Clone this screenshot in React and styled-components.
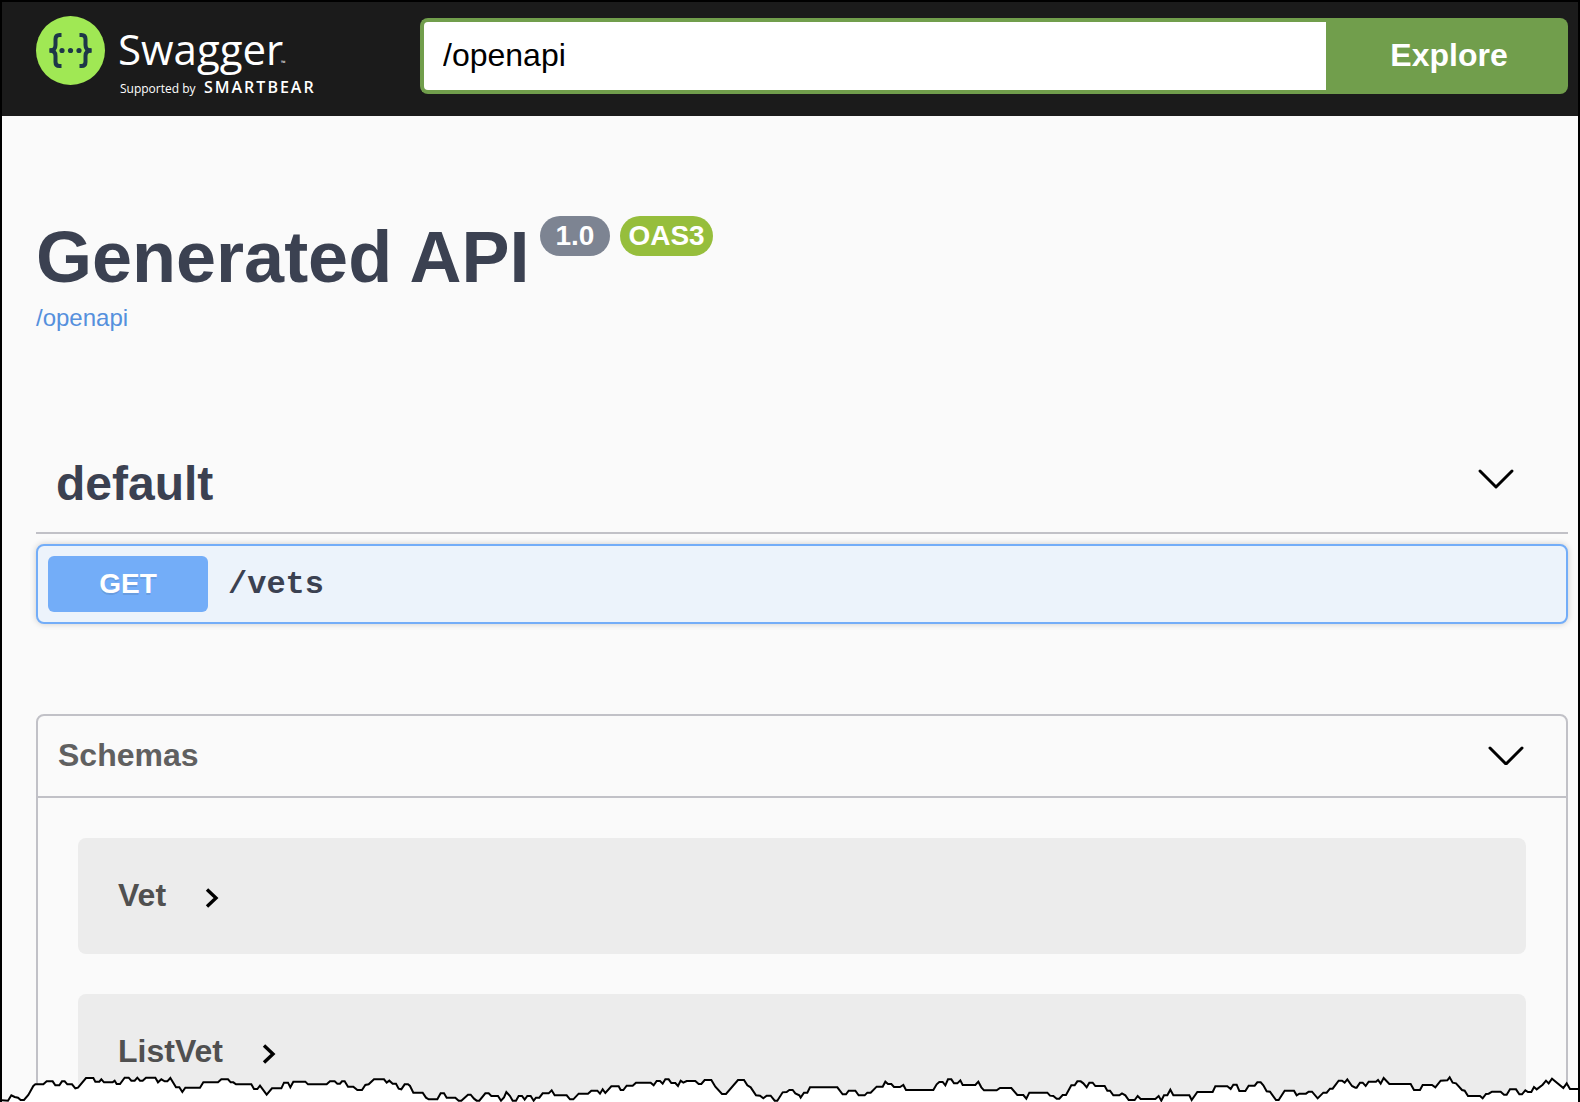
import React, { useState } from "react";
import styled, { createGlobalStyle } from "styled-components";

const GlobalStyle = createGlobalStyle`
  *, *::before, *::after { box-sizing: border-box; }
  body {
    margin: 0;
    background: #fff;
    color: #3b4151;
    font-family: "Liberation Sans", Arial, sans-serif;
  }
  button, input { font: inherit; }
`;

const Page = styled.div`
  position: relative;
  height: 100vh;
  overflow: hidden;
  border: 2px solid #000;
  border-bottom: 0;
  background: #fafafa;
`;

const Topbar = styled.header`
  display: flex;
  align-items: flex-start;
  padding: 16px 10px 22px 34px;
  background: #1b1b1b;
`;

const LogoLink = styled.a`
  flex: 0 0 384px;
  height: 76px;
  color: #fff;
  text-decoration: none;
`;

const LogoDrawing = styled.svg`
  display: block;
  overflow: visible;
  fill: #fff;
  font-family: "Open Sans", "Noto Sans", sans-serif;
`;

const SpecForm = styled.form`
  display: flex;
  flex: 1;
  min-width: 0;
  height: 76px;
`;

const SpecInput = styled.input`
  flex: 1;
  min-width: 0;
  padding: 0 19px 2px;
  border: 4px solid #719e4c;
  border-right: 0;
  border-radius: 8px 0 0 8px;
  outline: none;
  background: #fff;
  color: #000;
  font-size: 32px;
`;

const ExploreButton = styled.button`
  flex: 0 0 242px;
  padding: 0 0 2px 4px;
  border: 0;
  border-radius: 0 8px 8px 0;
  background: #719e4c;
  color: #fff;
  font-size: 32px;
  font-weight: 700;
`;

const Main = styled.main`
  padding: 100px 10px 0 34px;
`;

const Info = styled.section`
  margin-bottom: 104px;
`;

const TitleRow = styled.div`
  display: flex;
  align-items: flex-start;
  gap: 10px;
  margin-bottom: 6px;
`;

const Title = styled.h1`
  margin: 0;
  font-size: 72px;
  line-height: 82px;
`;

const Badge = styled.span`
  padding: 0 ${(p) => (p.$oas ? 8 : 16)}px;
  border-radius: 20px;
  background: ${(p) => (p.$oas ? "#96be3c" : "#7d8492")};
  color: #fff;
  font-size: 28px;
  font-weight: 700;
  line-height: 40px;
`;

const SpecLink = styled.a`
  display: block;
  width: max-content;
  color: #5590dd;
  font-size: 24px;
  line-height: 28px;
  text-decoration: none;
`;

const SectionHeader = styled.button`
  display: flex;
  align-items: center;
  justify-content: space-between;
  width: 100%;
  border: 0;
  border-bottom: 2px solid #c1c1c7;
  background: none;
  text-align: left;
  font-weight: 700;
`;

const TagHeader = styled(SectionHeader)`
  padding: 20px 52px 20px 20px;
  color: #3b4151;
  font-size: 48px;
  line-height: 56px;
`;

const SchemasHeader = styled(SectionHeader)`
  padding: 20px 40px 22px 20px;
  color: #606060;
  font-size: 32px;
  line-height: 38px;
`;

const Chevron = styled.svg`
  flex: none;
  width: 40px;
  fill: none;
  stroke: #000;
  stroke-width: 3;
  stroke-linecap: round;
  stroke-linejoin: round;
`;

const Operation = styled.button`
  display: flex;
  align-items: center;
  gap: 20px;
  width: 100%;
  margin: 10px 0 90px;
  padding: 10px;
  border: 2px solid #73adf8;
  border-radius: 8px;
  background: #ecf3fb;
  box-shadow: 0 0 6px rgba(0, 0, 0, 0.19);
  text-align: left;
`;

const Method = styled.span`
  width: 160px;
  border-radius: 6px;
  background: #73adf8;
  color: #fff;
  font-size: 28px;
  font-weight: 700;
  line-height: 56px;
  text-align: center;
  text-shadow: 0 2px 0 rgba(0, 0, 0, 0.1);
`;

const Path = styled.code`
  color: #3b4151;
  font-family: "Liberation Mono", "Courier New", monospace;
  font-size: 32px;
  font-weight: 700;
`;

const Schemas = styled.section`
  border: 2px solid #c1c1c7;
  border-radius: 8px;
`;

const SchemaList = styled.div`
  display: grid;
  gap: 40px;
  padding: 40px;
`;

const SchemaCard = styled.button`
  display: flex;
  align-items: center;
  gap: 36px;
  padding: 38px 40px 40px;
  border: 0;
  border-radius: 8px;
  background: #ececec;
  color: #505050;
  font-size: 32px;
  font-weight: 700;
  line-height: 38px;
  text-align: left;
`;

const Arrow = styled.svg`
  flex: none;
  width: 20px;
  height: 30px;
  fill: none;
  stroke: #000;
  stroke-width: 3.4;
`;

const TornEdge = styled.svg`
  position: absolute;
  bottom: 0;
  left: -2px;
  display: block;
  width: calc(100% + 4px);
  height: 52px;
`;

const tornPoints =
  "0,150 24,152 34,136 44,141 54,143 62,150 72,150 85,135 100,108 106,103 130,103 140,94 158,94 166,106 178,106 186,94 194,94 202,103 216,103 226,115 234,113 258,84 280,84 286,95 298,95 304,88 312,97 338,97 344,92 350,102 360,102 374,83 386,83 394,92 404,92 412,83 420,92 428,92 438,83 466,83 474,97 484,88 494,94 502,94 511,84 528,112 538,112 547,126 556,113 600,113 610,97 654,97 664,88 684,88 692,97 700,97 708,103 754,103 762,117 772,117 780,107 800,134 816,115 844,115 852,98 864,98 871,112 880,95 916,95 924,103 980,103 990,94 1004,94 1012,101 1020,101 1026,94 1034,94 1044,110 1060,110 1072,120 1086,120 1096,105 1106,103 1122,88 1152,88 1160,98 1168,92 1178,101 1188,101 1196,116 " +
  "1204,118 1214,103 1224,103 1230,108 1240,128 1268,128 1278,143 1286,148 1312,148 1322,130 1332,130 1340,143 1366,143 1376,152 1384,152 1404,134 1412,134 1422,146 1430,152 1438,152 1456,130 1466,130 1474,138 1494,138 1503,152 1512,142 1519,126 1530,138 1538,152 1548,152 1556,138 1566,138 1574,149 1582,138 1592,138 1601,152 1608,143 1618,143 1628,130 1646,130 1655,121 1664,136 1700,136 1710,148 1720,148 1736,131 1764,131 1774,122 1792,122 1800,131 1808,118 1816,129 1834,109 1856,109 1862,120 1870,120 1880,107 1898,107 1908,98 1952,98 1961,106 1970,93 1980,93 1988,101 1996,88 2006,88 2014,99 2026,99 2034,108 2042,92 2050,98 2060,93 2086,93 2096,102 2104,102 2114,90 2134,90 2146,110 2166,132 2178,132 2214,90 2232,90 2242,106 2252,112 2268,136 2280,137 2290,145 2300,137 2312,137 2324,152 2332,152 2348,127 2360,126 2368,120 2378,120 2386,130 2398,136 " +
  "2402,143 2412,128 2422,128 2430,112 2512,112 2528,133 2538,133 2546,122 2566,122 2576,136 2594,136 2602,128 2612,128 2630,110 2648,110 2656,95 2664,102 2674,102 2682,111 2700,111 2710,105 2718,120 2800,120 2810,103 2818,96 2828,96 2836,106 2844,88 2854,88 2862,100 2872,100 2881,91 2888,105 2926,105 2935,95 2944,112 2952,121 2990,121 3000,114 3034,114 3052,135 3070,135 3079,146 3088,128 3142,128 3150,137 3160,138 3170,146 3178,146 3188,135 3198,135 3214,106 3224,106 3232,94 3242,94 3250,100 3260,112 3268,98 3278,98 3286,108 3314,108 3322,122 3330,122 3340,136 3358,136 3366,130 3376,136 3386,150 3404,150 3413,138 3422,147 3466,147 3476,138 3484,152 3492,136 3502,136 3511,119 3520,136 " +
  "3568,136 3575,150 3592,126 3638,126 3646,109 3682,109 3692,117 3700,104 3710,104 3718,123 3736,123 3746,107 3764,107 3772,97 3782,97 3790,106 3800,124 3810,125 3828,150 3836,150 3854,122 3882,122 3890,136 3898,131 3918,131 3926,125 3936,125 3953,145 3970,128 3980,128 3990,116 3998,116 4016,92 4026,92 4034,98 4042,88 4056,108 4066,113 4070,113 4080,98 4088,98 4097,108 4106,95 4128,95 4134,90 4142,101 4151,84 4168,102 4232,102 4242,120 4260,120 4268,105 4296,105 4306,112 4322,92 4342,91 4349,82 4358,98 4368,100 4386,120 4394,122 4404,138 4440,138 4448,145 4458,132 4466,131 4476,125 4502,125 4512,134 4520,134 4530,118 4548,118 4558,133 4566,133 4576,121 4584,126 4594,126 4602,111 4610,118 4628,104 4638,92 4646,100 4656,86 4690,114 4700,100 4710,117 4740,117";

function SwaggerLogo() {
  return (
    <LogoDrawing width="290" height="82" viewBox="0 2 290 82" aria-hidden="true">
      <circle cx="34.5" cy="34.5" r="34.5" fill="#a0e854" />
      <g fill="none" stroke="#1d3748" strokeWidth="4">
        <path d="M25.500 19 h-2 q-4 0 -4 4 v6 q0 5.500 -5.500 5.500 q5.500 0 5.500 5.500 v6 q0 4 4 4 h2" />
        <path d="M43.500 19 h2 q4 0 4 4 v6 q0 5.500 5.500 5.500 q-5.500 0 -5.500 5.500 v6 q0 4 -4 4 h-2" />
      </g>
      <g fill="#1d3748">
        <rect x="13.300" y="32.300" width="4.500" height="4.400" />
        <rect x="51.200" y="32.300" width="4.500" height="4.400" />
        <circle cx="26" cy="34.500" r="2.600" />
        <circle cx="34.500" cy="34.500" r="2.600" />
        <circle cx="43" cy="34.500" r="2.600" />
      </g>
      <text x="82" y="49" fontSize="42" fontWeight="400">Swagger</text>
      <text x="245" y="49" fontSize="6">™</text>
      <text x="84" y="77" fontSize="12">Supported by</text>
      <text x="168" y="77" fontSize="16" fontWeight="600" letterSpacing="2">SMARTBEAR</text>
    </LogoDrawing>
  );
}

function SchemaItem({ name }) {
  return (
    <SchemaCard type="button">
      {name}
      <Arrow viewBox="0 0 20 30" aria-hidden="true">
        <path d="M5 9.500 L14 18 L5 26.500" />
      </Arrow>
    </SchemaCard>
  );
}

export default function App() {
  const [url, setUrl] = useState("/openapi");
  return (
    <>
      <GlobalStyle />
      <Page>
        <Topbar>
          <LogoLink href="#" aria-label="Swagger, supported by SmartBear">
            <SwaggerLogo />
          </LogoLink>
          <SpecForm onSubmit={(e) => e.preventDefault()}>
            <SpecInput
              type="text"
              aria-label="API definition URL"
              value={url}
              onChange={(e) => setUrl(e.target.value)}
            />
            <ExploreButton type="submit">Explore</ExploreButton>
          </SpecForm>
        </Topbar>
        <Main>
          <Info>
            <TitleRow>
              <Title>Generated API</Title>
              <Badge>1.0</Badge>
              <Badge $oas>OAS3</Badge>
            </TitleRow>
            <SpecLink href="/openapi">/openapi</SpecLink>
          </Info>
          <TagHeader type="button">
            default
            <Chevron viewBox="0 0 40 32" aria-hidden="true">
              <path d="M4 3 L20 19 L36 3" />
            </Chevron>
          </TagHeader>
          <Operation type="button">
            <Method>GET</Method>
            <Path>/vets</Path>
          </Operation>
          <Schemas>
            <SchemasHeader type="button">
              Schemas
              <Chevron viewBox="0 0 40 20" aria-hidden="true">
                <path d="M4 3 L20 19 L36 3" />
              </Chevron>
            </SchemasHeader>
            <SchemaList>
              <SchemaItem name="Vet" />
              <SchemaItem name="ListVet" />
            </SchemaList>
          </Schemas>
        </Main>
        <TornEdge viewBox="0 0 4740 156" preserveAspectRatio="none" aria-hidden="true">
          <polygon points={`0,156 ${tornPoints} 4740,156`} fill="#fff" />
          <polyline points={tornPoints} fill="none" stroke="#000" strokeWidth="6" />
        </TornEdge>
      </Page>
    </>
  );
}
